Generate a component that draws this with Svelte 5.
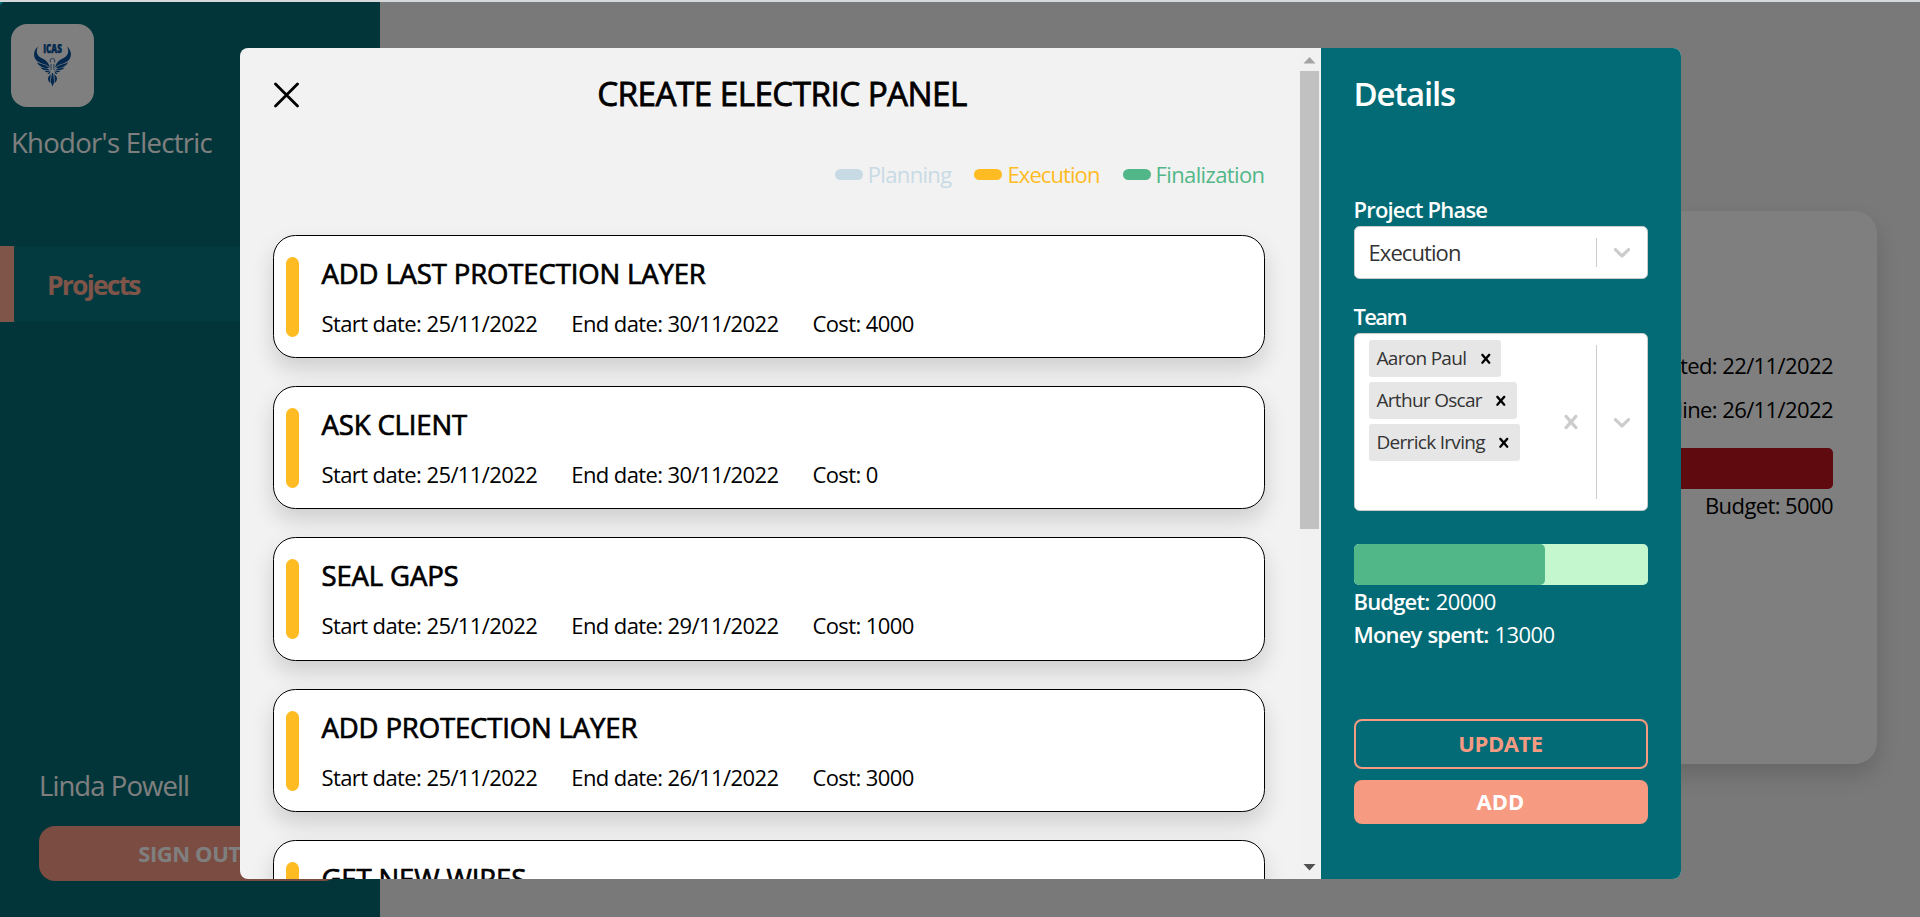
<script>
  const tasks = [
    { title: 'ADD LAST PROTECTION LAYER', start: '25/11/2022', end: '30/11/2022', cost: 4000 },
    { title: 'ASK CLIENT', start: '25/11/2022', end: '30/11/2022', cost: 0 },
    { title: 'SEAL GAPS', start: '25/11/2022', end: '29/11/2022', cost: 1000 },
    { title: 'ADD PROTECTION LAYER', start: '25/11/2022', end: '26/11/2022', cost: 3000 },
    { title: 'GET NEW WIRES' }
  ];
  const phases = [
    { name: 'Planning', color: '#c8dbe5', spacing: -0.03 },
    { name: 'Execution', color: '#ffbb22', spacing: -0.0416 },
    { name: 'Finalization', color: '#52b788', spacing: -0.028 }
  ];
  const team = ['Aaron Paul', 'Arthur Oscar', 'Derrick Irving'];
  const budget = 20000;
  const spent = 13000;
  const cross =
    'M14.348 14.849c-0.469 0.469-1.229 0.469-1.697 0l-2.651-3.030-2.651 3.029c-0.469 0.469-1.229 0.469-1.697 0-0.469-0.469-0.469-1.229 0-1.697l2.758-3.15-2.759-3.152c-0.469-0.469-0.469-1.228 0-1.697s1.228-0.469 1.697 0l2.652 3.031 2.651-3.031c0.469-0.469 1.228-0.469 1.697 0s0.469 1.229 0 1.697l-2.758 3.152 2.758 3.15c0.469 0.469 0.469 1.229 0 1.698z';
  const chevron =
    'M4.516 7.548c0.436-0.446 1.043-0.481 1.576 0l3.908 3.747 3.908-3.747c0.533-0.481 1.141-0.446 1.574 0 0.436 0.445 0.408 1.197 0 1.615-0.406 0.418-4.695 4.502-4.695 4.502-0.217 0.223-0.502 0.335-0.787 0.335s-0.57-0.112-0.789-0.335c0 0-4.287-4.084-4.695-4.502s-0.436-1.17 0-1.615z';
</script>

{#snippet icon(path, size)}
  <svg width={size} height={size} viewBox="0 0 20 20" fill="currentColor"><path d={path} /></svg>
{/snippet}

<div class="page">
  <aside class="sidebar">
    <div class="logo">
      <svg width="40" height="44" viewBox="0 0 40 44" fill="#04509c">
        <text x="10.3" y="8.8" textLength="18.5" lengthAdjust="spacingAndGlyphs" class="logo-text">ICAS</text>
        <path d="M5 2.500C.5 6-.6 13 4 17c4 3.400 9 2.400 12.800 6.500C15.500 17 11 15.500 7.500 13.500 3.500 11 2.800 7 5 2.500Z" />
        <path d="M34 2.500c4.500 3.500 5.600 10.500 1 14.500-4 3.400-9 2.400-12.800 6.500C23.500 17 28 15.500 31.500 13.500 35.500 11 36.200 7 34 2.500Z" />
        <path d="M4 18.500c3.500 1.800 8.500 1.500 12.500 5.500-5 .5-10-.8-12.500-5.500ZM7.500 23.500c3 1 6 .2 9 2-3 1.400-7 1-9-2ZM11.500 27.200c2-.2 3.700-.8 5.500-.7-1 2-3.300 2.400-5.500.7ZM14.500 29.800l3-2.800c0 2-.8 3.500-3 2.800Z" />
        <path d="M35 18.500c-3.500 1.800-8.500 1.500-12.500 5.500 5 .5 10-.8 12.500-5.500ZM31.500 23.500c-3 1-6 .2-9 2 3 1.400 7 1 9-2ZM27.500 27.200c-2-.2-3.700-.8-5.500-.7 1 2 3.300 2.400 5.500.7ZM24.500 29.800l-3-2.800c0 2 .8 3.500 3 2.800Z" />
        <path d="M17.200 18.500v-3l2.200-1.200 2.300 1.200v3M18 20v6M21 20v6" fill="none" stroke="#04509c" stroke-width=".8" />
        <path d="M18.900 29h1.200l1.200 9-1.800 4.500-1.800-4.500ZM17.700 30l-.6 9c-2-2-2.500-4-1.800-6ZM21.300 30l.6 9c2-2 2.500-4 1.800-6Z" />
      </svg>
    </div>
    <div class="company">Khodor's Electric</div>
    <nav class="nav-item">Projects</nav>
    <div class="account">
      <div class="user">Linda Powell</div>
      <button class="sign-out">SIGN OUT</button>
    </div>
  </aside>
  <main class="content">
    <section class="project">
      <div class="line">Created: 22/11/2022</div>
      <div class="line">Deadline: 26/11/2022</div>
      <div class="over-budget"></div>
      <div class="budget-line">Budget: 5000</div>
    </section>
  </main>
</div>

<div class="overlay">
  <div class="modal">
    <div class="tasks">
      <div class="scroll-area">
        <header class="heading">
          <svg class="close" width="26" height="26" viewBox="0 0 26 26"><path d="M2.500 2 24.500 24M24.500 2 2.500 24" stroke="#000" stroke-width="2.800" stroke-linecap="round" /></svg>
          <h1>CREATE ELECTRIC PANEL</h1>
        </header>
        <div class="legend">
          {#each phases as phase}
            <div class="phase" style="color:{phase.color};letter-spacing:{phase.spacing}em">
              <i></i><span>{phase.name}</span>
            </div>
          {/each}
        </div>
        <div class="list">
          {#each tasks as task}
            <article class="card">
              <div class="marker"></div>
              <div class="info">
                <h2>{task.title}</h2>
                {#if task.start}
                  <div class="meta">
                    <span>Start date: {task.start}</span>
                    <span>End date: {task.end}</span>
                    <span>Cost: {task.cost}</span>
                  </div>
                {/if}
              </div>
            </article>
          {/each}
        </div>
      </div>
      <div class="scrollbar">
        <svg width="22" height="24" viewBox="0 0 22 24"><path d="M4.500 15.500h12L10.500 9Z" fill="#a3a3a3" /></svg>
        <div class="thumb"></div>
        <svg class="down" width="22" height="24" viewBox="0 0 22 24"><path d="M4.500 9h12L10.500 15.500Z" fill="#505050" /></svg>
      </div>
    </div>

    <div class="details">
      <h3>Details</h3>
      <div class="label">Project Phase</div>
      <div class="select">
        <div class="value">Execution</div>
        <div class="divider"></div>
        <div class="indicator">{@render icon(chevron, 28)}</div>
      </div>
      <div class="label team-label">Team</div>
      <div class="select multi">
        <div class="tags">
          {#each team as member}
            <div class="tag"><span>{member}</span>{@render icon(cross, 19.6)}</div>
          {/each}
        </div>
        <div class="indicator">{@render icon(cross, 28)}</div>
        <div class="divider"></div>
        <div class="indicator">{@render icon(chevron, 28)}</div>
      </div>
      <div class="progress"><div style="width:{(spent / budget) * 100}%"></div></div>
      <div class="money"><b>Budget:</b> {budget}</div>
      <div class="money"><b>Money spent:</b> {spent}</div>
      <button class="update">UPDATE</button>
      <button class="add">ADD</button>
    </div>
  </div>
</div>

<style>
  :global(body) {
    background: #d5d9dc;
    font-family: "Open Sans", "Noto Sans", sans-serif;
    font-size: 22px;
    line-height: 33.6px;
    letter-spacing: -0.027em;
    color: #000;
    overflow: hidden;
  }
  :global(*) {
    box-sizing: border-box;
  }
  h1, h2, h3 {
    margin: 0;
  }
  button {
    font: inherit;
    font-weight: 700;
    letter-spacing: -0.02em;
    padding: 0;
    border: 0;
    display: block;
  }
  svg {
    display: block;
    flex: none;
  }
  .page {
    display: flex;
    height: 915px;
    margin-top: 2px;
    background: #f2f2f2;
  }
  .sidebar {
    width: 380px;
    background: #046a73;
    display: flex;
    flex-direction: column;
    padding-top: 22px;
  }
  .logo {
    width: 83px;
    height: 83px;
    margin-left: 11px;
    border-radius: 16px;
    background: #fff;
    display: flex;
    justify-content: center;
    padding-top: 20px;
  }
  .logo-text {
    font: 800 11.500px "Open Sans", sans-serif;
    letter-spacing: 0;
    stroke: #04509c;
    stroke-width: 0.5px;
  }
  .company, .user {
    font-size: 27.5px;
    line-height: 42px;
    color: #fff;
    letter-spacing: -0.026em;
  }
  .company {
    margin: 15px 0 0 11px;
  }
  .nav-item {
    margin-top: 82px;
    height: 76px;
    border-left: 14px solid #fea992;
    background: #06747f;
    padding-left: 33px;
    font-size: 26.5px;
    font-weight: 700;
    letter-spacing: -0.068em;
    line-height: 78px;
    color: #fea992;
  }
  .account {
    margin: auto 40px 36px 39px;
  }
  .user {
    margin-bottom: 19px;
    letter-spacing: -0.034em;
  }
  .sign-out {
    width: 100%;
    height: 55px;
    border-radius: 16px;
    background: #f79a84;
    color: #fff;
  }
  .content {
    flex: 1;
    padding: 209px 43px 0 53px;
  }
  .project {
    height: 553px;
    border-radius: 22.4px;
    background: #fff;
    box-shadow: 0 11px 22px rgba(0, 0, 0, 0.15);
    padding: 138px 44px 0;
    text-align: right;
  }
  .line {
    height: 44px;
  }
  .over-budget {
    height: 41px;
    margin-top: 11px;
    border-radius: 5px;
    background: #bf141e;
  }
  .overlay {
    position: absolute;
    inset: 2px 0 0;
    border-top-left-radius: 5px;
    background: rgba(0, 0, 0, 0.5);
    display: flex;
    justify-content: center;
    align-items: flex-start;
    padding-top: 46px;
  }
  .modal {
    width: 1441px;
    height: 831px;
    border-radius: 8px;
    overflow: hidden;
    display: flex;
    background: #f2f2f2;
  }
  .tasks {
    width: 1081px;
    display: flex;
  }
  .scroll-area {
    flex: 1;
    height: 831px;
    overflow: hidden;
    padding: 0 34px 0 33px;
  }
  .heading {
    display: flex;
    align-items: center;
    padding-top: 23px;
    height: 67px;
  }
  .close {
    margin-top: 3px;
  }
  h1 {
    flex: 1;
    text-align: center;
    font-size: 33.300px;
    font-weight: 500;
    line-height: 40px;
    letter-spacing: -0.0175em;
    padding-left: 1px;
    -webkit-text-stroke: 0.8px #000;
  }
  .legend {
    display: flex;
    justify-content: flex-end;
    gap: 23px;
    margin: 43px 0 43px;
  }
  .phase {
    display: flex;
    align-items: center;
    gap: 5px;
  }
  .phase i {
    width: 28px;
    height: 11px;
    border-radius: 6px;
    background: currentColor;
  }
  .list {
    display: flex;
    flex-direction: column;
    gap: 28px;
  }
  .card {
    height: 123.400px;
    flex: none;
    display: flex;
    border: 1px solid #000;
    border-radius: 22.4px;
    background: #fff;
    box-shadow: 0 11px 22px rgba(0, 0, 0, 0.15);
    padding: 17px 12px 0;
  }
  .marker {
    width: 13px;
    height: 80px;
    margin-top: 4px;
    border-radius: 6.500px;
    background: #ffbb22;
  }
  .info {
    margin-left: 23px;
  }
  h2 {
    font-size: 27.5px;
    font-weight: 500;
    line-height: 42px;
    letter-spacing: -0.005em;
    -webkit-text-stroke: 0.7px #000;
  }
  .meta {
    display: flex;
    gap: 34px;
    margin-top: 12px;
  }
  .scrollbar {
    width: 22px;
    display: flex;
    flex-direction: column;
    background: #f1f1f1;
  }
  .thumb {
    width: 19px;
    height: 458px;
    margin-left: 1px;
    margin-top: -1px;
    background: #c1c1c1;
  }
  .down {
    margin-top: auto;
  }
  .details {
    width: 360px;
    background: #026b75;
    color: #fff;
    padding: 25px 33px 0;
  }
  h3 {
    font-size: 33px;
    font-weight: 600;
    line-height: 42px;
    letter-spacing: -0.037em;
  }
  .label {
    font-weight: 600;
    letter-spacing: -0.037em;
    margin: 78px 0 -1px;
  }
  .team-label {
    margin: 21px 0 0;
    letter-spacing: -0.075em;
  }
  .select {
    display: flex;
    height: 53px;
    border: 1.400px solid #ccc;
    border-radius: 5.600px;
    background: #fff;
    color: #333;
  }
  .select.multi {
    height: 178px;
  }
  .value {
    flex: 1;
    padding: 9px 0 0 14px;
    letter-spacing: -0.0416em;
  }
  .divider {
    width: 1px;
    margin: 11px 0;
    background: #ccc;
  }
  .indicator {
    width: 50px;
    display: flex;
    align-items: center;
    justify-content: center;
    color: #ccc;
  }
  .tags {
    flex: 1;
    display: flex;
    flex-direction: column;
    align-items: flex-start;
    gap: 5px;
    padding: 6px 0 0 14px;
  }
  .tag {
    height: 37px;
    display: flex;
    align-items: center;
    gap: 9.500px;
    padding: 0 6px 0 8px;
    border-radius: 3px;
    background: #e6e6e6;
    font-size: 19px;
    letter-spacing: -0.037em;
  }
  .tag :global(svg) {
    color: #000;
  }
  .progress {
    height: 41px;
    margin: 33px 0 0;
    border-radius: 5px;
    background: #c4f7ce;
    overflow: hidden;
  }
  .progress div {
    height: 100%;
    border-radius: 5px;
    background: #52b788;
  }
  .money {
    line-height: 33px;
    word-spacing: 1px;
  }
  .money b {
    font-weight: 600;
    letter-spacing: -0.037em;
  }
  .update, .add {
    width: 100%;
    border-radius: 8px;
  }
  .update {
    height: 50px;
    margin: 68px 0 11px;
    border: 2px solid #f79a82;
    background: transparent;
    color: #f79a82;
  }
  .add {
    height: 44px;
    background: #f79a82;
    color: #fff;
    letter-spacing: 0.003em;
  }
</style>
